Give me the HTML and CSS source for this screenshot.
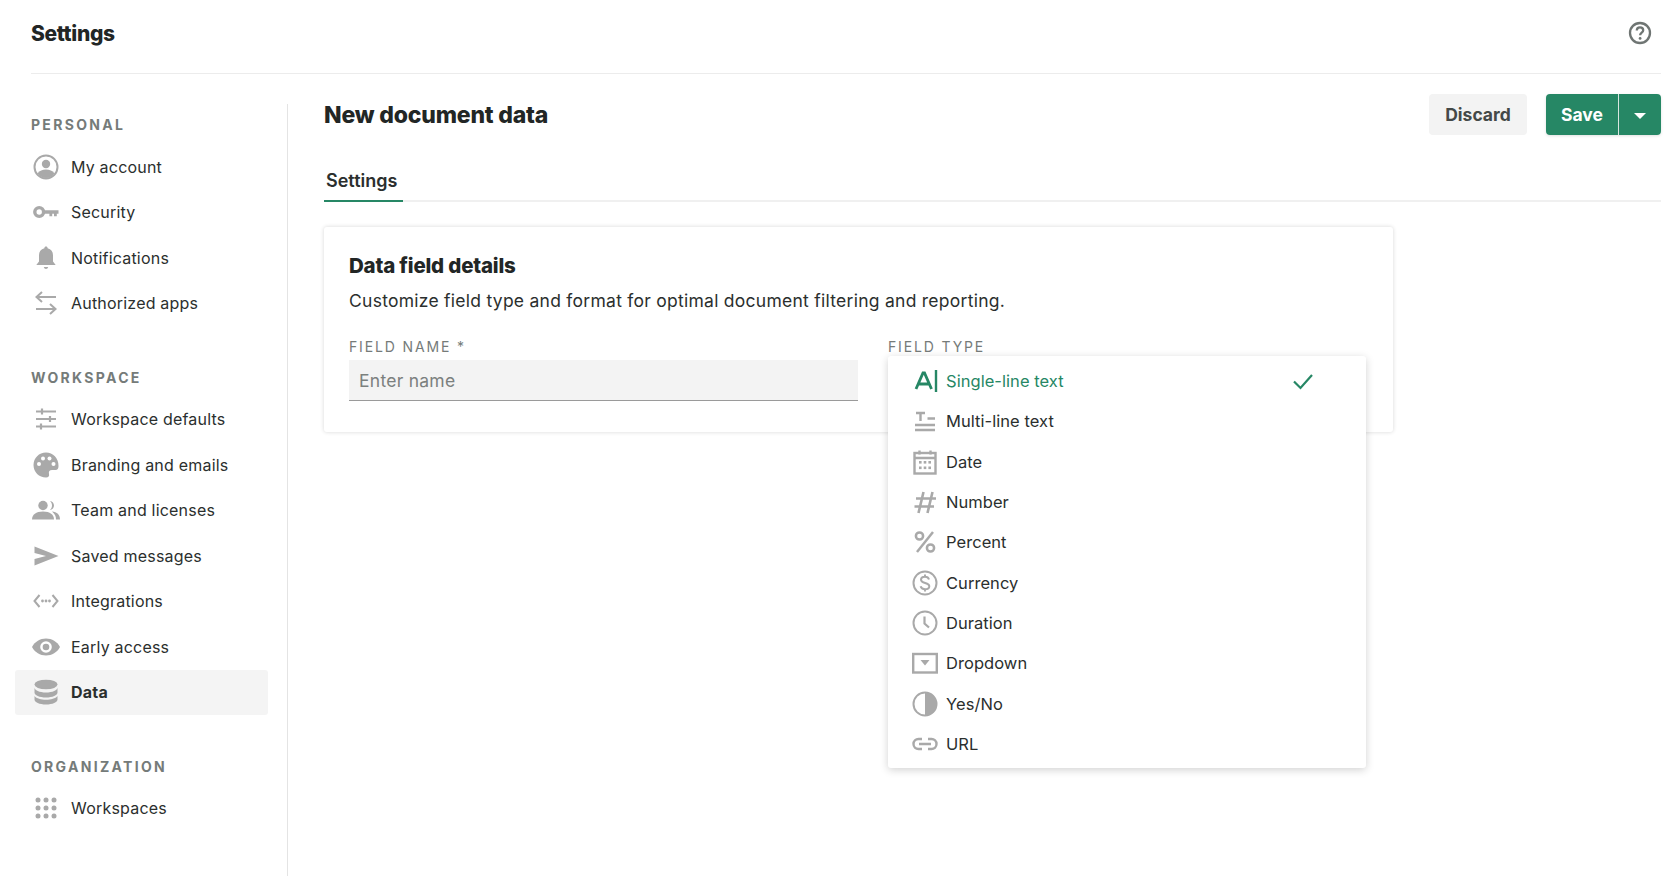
FILE: index.html
```html
<!DOCTYPE html>
<html lang="en">
  <head>
    <meta charset="UTF-8" />
    <title>Settings</title>
    <link rel="stylesheet" href="styles.css">
  </head>
  <body>
    <header class="topbar">
      <h1 class="appTitle">Settings</h1>
      <svg class="help" viewBox="0 0 24 24" width="24" height="24">
        <circle cx="12" cy="12" r="10" fill="none" stroke="#6f7573" stroke-width="2.3"/>
        <path d="M8.8 9.4c0-2 1.4-3.1 3.2-3.1s3.2 1.1 3.2 2.9c0 2.4-3.1 2.4-3.1 5" fill="none" stroke="#6f7573" stroke-width="2.3"/>
        <circle cx="12.1" cy="17.4" r="1.4" fill="#6f7573"/>
      </svg>
    </header>

    <div class="layout">
      <nav class="sidebar">
        <div class="navGroup">
          <div class="navTitle">PERSONAL</div>
          <a class="navItem">
            <svg viewBox="0 0 26 26" width="26" height="26"><circle cx="13" cy="13" r="11.5" fill="none" stroke="#a9a9a9" stroke-width="2"/><circle cx="13" cy="10" r="4.2" fill="#a9a9a9"/><path d="M4.5 19.5c2-3 5-4 8.5-4s6.5 1 8.5 4c-2 2.800-5 4.500-8.500 4.500s-6.500-1.700-8.500-4.500z" fill="#a9a9a9"/></svg>
            <span>My account</span>
          </a>
          <a class="navItem">
            <svg viewBox="0 0 26 26" width="26" height="26"><circle cx="6.200" cy="13" r="4.400" fill="none" stroke="#a9a9a9" stroke-width="3.400"/><path d="M10 11.200h15.500v3.600h-1.700v2.400H21v-2.400h-1.800v2.400h-2.800v-2.400H10z" fill="#a9a9a9"/></svg>
            <span>Security</span>
          </a>
          <a class="navItem">
            <svg viewBox="0 0 26 26" width="26" height="26"><path d="M13 1.500c1 0 1.600.7 1.600 1.700 3.600.8 5.400 3.500 5.400 7v6.300l2.700 3.500H3.300L6 16.500v-6.300c0-3.500 1.800-6.200 5.400-7 0-1 .6-1.700 1.600-1.700z" fill="#a9a9a9"/><path d="M10.800 22h4.400c-.3 1.300-1.100 2-2.200 2s-1.900-.7-2.200-2z" fill="#a9a9a9"/></svg>
            <span>Notifications</span>
          </a>
          <a class="navItem">
            <svg viewBox="0 0 26 26" width="26" height="26"><path d="M3.500 7H23M9 2L3.500 7 9 12M3 19h19.500M17 14l5.500 5-5.500 5" fill="none" stroke="#a9a9a9" stroke-width="2"/></svg>
            <span>Authorized apps</span>
          </a>
        </div>

        <div class="navGroup">
          <div class="navTitle">WORKSPACE</div>
          <a class="navItem">
            <svg viewBox="0 0 26 26" width="26" height="26"><path d="M3 5.500h20M3 13h20M3 20.500h20M9 2.500v6M17 10v6M8 17.500v6" fill="none" stroke="#a9a9a9" stroke-width="2.200"/></svg>
            <span>Workspace defaults</span>
          </a>
          <a class="navItem">
            <svg viewBox="0 0 26 26" width="26" height="26"><path d="M13 .5C6 .5.500 6 .500 13S6 25.500 13 25.500c2.500 0 3.500-1.500 3-3.500-.6-2.400.6-4 3-4h3.500c2 0 3-1.500 3-4C25.500 6 20 .5 13 .5z" fill="#a9a9a9"/><circle cx="6" cy="12" r="2" fill="#fff"/><circle cx="10" cy="6.500" r="2" fill="#fff"/><circle cx="16.500" cy="6.500" r="2" fill="#fff"/><circle cx="20.500" cy="12" r="2" fill="#fff"/></svg>
            <span>Branding and emails</span>
          </a>
          <a class="navItem">
            <svg viewBox="0 0 28 26" width="28" height="26"><circle cx="11" cy="8.500" r="4.700" fill="#a9a9a9"/><path d="M18 4c2.500.5 4 2.300 4 4.500s-1.500 4-4 4.500c1.300-1.300 2-2.800 2-4.500S19.300 5.300 18 4z" fill="#a9a9a9"/><path d="M0 22.500c0-5 4-8 11-8s11 3 11 8z" fill="#a9a9a9"/><path d="M20 14.500c5 .5 8 3 8 8h-4c0-3-1-5.500-4-8z" fill="#a9a9a9"/></svg>
            <span>Team and licenses</span>
          </a>
          <a class="navItem">
            <svg viewBox="0 0 26 26" width="26" height="26"><path d="M1.500 3.500L25.500 13 1.500 22.500v-6.500L13 13 1.500 10z" fill="#a9a9a9"/></svg>
            <span>Saved messages</span>
          </a>
          <a class="navItem">
            <svg viewBox="0 0 26 26" width="26" height="26"><path d="M6.500 7L1.500 13l5 6M19.500 7l5 6-5 6" fill="none" stroke="#a9a9a9" stroke-width="2"/><circle cx="9.500" cy="13" r="1.400" fill="#a9a9a9"/><circle cx="13" cy="13" r="1.400" fill="#a9a9a9"/><circle cx="16.500" cy="13" r="1.400" fill="#a9a9a9"/></svg>
            <span>Integrations</span>
          </a>
          <a class="navItem">
            <svg viewBox="0 0 28 26" width="28" height="26"><path d="M0 13C3 7.500 8 4.500 14 4.500S25 7.500 28 13c-3 5.500-8 8.500-14 8.500S3 18.500 0 13z" fill="#a9a9a9"/><circle cx="14" cy="13" r="5.800" fill="#fff"/><circle cx="14" cy="13" r="3.300" fill="#a9a9a9"/></svg>
            <span>Early access</span>
          </a>
          <a class="navItem active">
            <svg viewBox="0 0 26 26" width="26" height="26"><ellipse cx="13" cy="5.500" rx="11.500" ry="4.800" fill="#a9a9a9"/><path d="M1.500 8.500c0 2.800 5 5 11.500 5s11.500-2.200 11.500-5v5c0 2.800-5 5-11.500 5s-11.500-2.200-11.500-5z" fill="#a9a9a9"/><path d="M1.500 17c2 2.500 6.500 3.800 11.500 3.800s9.500-1.300 11.500-3.800v3.500c0 2.800-5 5-11.500 5s-11.500-2.200-11.500-5z" fill="#a9a9a9"/></svg>
            <span>Data</span>
          </a>
        </div>

        <div class="navGroup">
          <div class="navTitle">ORGANIZATION</div>
          <a class="navItem">
            <svg viewBox="0 0 26 26" width="26" height="26"><g fill="#a9a9a9"><circle cx="5" cy="5" r="2.500"/><circle cx="13" cy="5" r="2.500"/><circle cx="21" cy="5" r="2.500"/><circle cx="5" cy="13" r="2.500"/><circle cx="13" cy="13" r="2.500"/><circle cx="21" cy="13" r="2.500"/><circle cx="5" cy="21" r="2.500"/><circle cx="13" cy="21" r="2.500"/><circle cx="21" cy="21" r="2.500"/></g></svg>
            <span>Workspaces</span>
          </a>
        </div>
      </nav>

      <main class="main">
        <div class="mainHead">
          <h2 class="pageTitle">New document data</h2>
          <div class="actions">
            <button class="btn discard">Discard</button>
            <div class="saveGroup">
              <button class="btn save">Save</button>
              <button class="btn saveArrow"><span class="caret"></span></button>
            </div>
          </div>
        </div>

        <div class="tabs">
          <div class="tab">Settings</div>
        </div>

        <section class="card">
          <h3 class="cardTitle">Data field details</h3>
          <p class="cardText">Customize field type and format for optimal document filtering and reporting.</p>
          <div class="fields">
            <div class="field">
              <label class="fieldLabel">FIELD NAME *</label>
              <div class="input">Enter name</div>
            </div>
            <div class="field typeField">
              <label class="fieldLabel">FIELD TYPE</label>
              <ul class="menu">
                <li class="menuItem selected">
                  <svg viewBox="0 0 26 26" width="26" height="26"><path d="M4 21L11 5h1.500l7 16M6.500 16h11" fill="none" stroke="#268765" stroke-width="2.800"/><path d="M24 2v22" stroke="#268765" stroke-width="2.400"/></svg>
                  <span>Single-line text</span>
                  <svg class="check" viewBox="0 0 22 22" width="22" height="22"><path d="M2 11.500l6.500 6.500L20 5" fill="none" stroke="#268765" stroke-width="2.200"/></svg>
                </li>
                <li class="menuItem">
                  <svg viewBox="0 0 26 26" width="26" height="26"><path d="M4 5h9M8.500 5v8M15.500 10.500h7.500M3 17h20M3 22h20" fill="none" stroke="#a9a9a9" stroke-width="2.400"/></svg>
                  <span>Multi-line text</span>
                </li>
                <li class="menuItem">
                  <svg viewBox="0 0 26 26" width="26" height="26"><rect x="2.500" y="4" width="21" height="20.500" fill="none" stroke="#a9a9a9" stroke-width="2.400"/><path d="M2.500 9h21M7.500 1.500v4M18.500 1.500v4" fill="none" stroke="#a9a9a9" stroke-width="2.400"/><g fill="#a9a9a9"><rect x="7" y="12" width="2.600" height="2.600"/><rect x="11.700" y="12" width="2.600" height="2.600"/><rect x="16.400" y="12" width="2.600" height="2.600"/><rect x="7" y="17.500" width="2.600" height="2.600"/><rect x="11.700" y="17.500" width="2.600" height="2.600"/><rect x="16.400" y="17.500" width="2.600" height="2.600"/></g></svg>
                  <span>Date</span>
                </li>
                <li class="menuItem">
                  <svg viewBox="0 0 26 26" width="26" height="26"><path d="M11.500 3L6.500 24M20.500 3l-5 21M4 9.500H24M2.500 17.500H22" fill="none" stroke="#a9a9a9" stroke-width="2.600"/></svg>
                  <span>Number</span>
                </li>
                <li class="menuItem">
                  <svg viewBox="0 0 26 26" width="26" height="26"><circle cx="7.500" cy="7" r="3.600" fill="none" stroke="#a9a9a9" stroke-width="2.500"/><circle cx="18.500" cy="19" r="3.600" fill="none" stroke="#a9a9a9" stroke-width="2.500"/><path d="M5 23L21 3" stroke="#a9a9a9" stroke-width="2.500"/></svg>
                  <span>Percent</span>
                </li>
                <li class="menuItem">
                  <svg viewBox="0 0 26 26" width="26" height="26"><circle cx="13" cy="13" r="11.500" fill="none" stroke="#a9a9a9" stroke-width="2"/><path d="M17 9.500c-.5-1.800-2-2.700-4-2.700-2.300 0-4 1.200-4 3 0 4.200 8.300 2.200 8.300 6.400 0 1.900-1.800 3-4.300 3-2.300 0-3.900-1-4.400-2.900M13 4.500v2.300M13 19.200v2.300" fill="none" stroke="#a9a9a9" stroke-width="2"/></svg>
                  <span>Currency</span>
                </li>
                <li class="menuItem">
                  <svg viewBox="0 0 26 26" width="26" height="26"><circle cx="13" cy="13" r="11.500" fill="none" stroke="#a9a9a9" stroke-width="2"/><path d="M12.500 6.500v7l4.500 4" fill="none" stroke="#a9a9a9" stroke-width="2.200"/></svg>
                  <span>Duration</span>
                </li>
                <li class="menuItem">
                  <svg viewBox="0 0 26 26" width="26" height="26"><rect x="1.200" y="4" width="23.600" height="18.500" fill="none" stroke="#a9a9a9" stroke-width="2.400"/><path d="M8.500 10h9l-4.500 5.500z" fill="#a9a9a9"/></svg>
                  <span>Dropdown</span>
                </li>
                <li class="menuItem">
                  <svg viewBox="0 0 26 26" width="26" height="26"><circle cx="13" cy="13" r="11.500" fill="none" stroke="#a9a9a9" stroke-width="2"/><path d="M13 1.500a11.500 11.500 0 0 1 0 23z" fill="#a9a9a9"/></svg>
                  <span>Yes/No</span>
                </li>
                <li class="menuItem">
                  <svg viewBox="0 0 26 26" width="26" height="26"><path d="M10 8H6.500a5 5 0 0 0 0 10H10M16 8h3.500a5 5 0 0 1 0 10H16M7 13h12" fill="none" stroke="#a9a9a9" stroke-width="2.400"/></svg>
                  <span>URL</span>
                </li>
              </ul>
            </div>
          </div>
        </section>
      </main>
    </div>
  </body>
</html>
```

FILE: styles.css
```css
* {
  margin: 0;
  padding: 0;
  box-sizing: border-box;
}

html,
body {
  height: 876px;
  overflow: hidden;
}

body {
  font-family: "Inter", "Liberation Sans", sans-serif;
  color: #2b2f2e;
  background: #fff;
}

.topbar {
  height: 74px;
  margin: 0 19px 0 31px;
  display: flex;
  align-items: center;
  justify-content: space-between;
  border-bottom: 1px solid #ececec;
  padding-bottom: 7px;
  padding-right: 9px;
}

.appTitle {
  font-size: 21px;
  font-weight: 800;
  color: #222625;
  letter-spacing: -0.35px;
}

.layout {
  display: flex;
  height: 802px;
  padding-right: 19px;
}

.sidebar {
  width: 288px;
  flex-shrink: 0;
  margin-top: 30px;
  padding: 11px 19px 0 15px;
  border-right: 1px solid #e4e4e4;
}

.navGroup {
  margin-bottom: 41.5px;
}

.navTitle {
  height: 20px;
  line-height: 20px;
  padding-left: 16px;
  margin-bottom: 9px;
  font-size: 14px;
  font-weight: 700;
  letter-spacing: 2.3px;
  color: #757b79;
}

.navItem {
  display: flex;
  align-items: center;
  height: 45.5px;
  padding-left: 16px;
  font-size: 16px;
  letter-spacing: 0.2px;
  color: #2b2f2e;
  border-radius: 3px;
}

.navItem svg {
  width: 30px;
  flex-shrink: 0;
  margin-right: 10px;
}

.navItem.active {
  background: #f4f4f4;
  font-weight: 700;
}

.main {
  flex: 1;
  padding: 20px 0 0 36px;
}

.mainHead {
  display: flex;
  align-items: center;
  justify-content: space-between;
  height: 41px;
}

.pageTitle {
  font-size: 23px;
  font-weight: 800;
  color: #222625;
  letter-spacing: -0.2px;
}

.actions {
  display: flex;
  gap: 19px;
}

.btn {
  height: 41px;
  border: none;
  border-radius: 4px;
  font-family: inherit;
  font-size: 17.5px;
  font-weight: 700;
  cursor: pointer;
}

.discard {
  width: 98px;
  background: #f3f3f3;
  color: #444948;
}

.saveGroup {
  display: flex;
  box-shadow: 0 1px 3px rgba(0, 0, 0, 0.12);
  border-radius: 4px;
}

.save {
  width: 73px;
  background: #268765;
  color: #fff;
  border-radius: 4px 0 0 4px;
  border-right: 1px solid #d8e6e0;
}

.saveArrow {
  width: 42px;
  background: #268765;
  border-radius: 0 4px 4px 0;
}

.caret {
  display: inline-block;
  border-left: 6px solid transparent;
  border-right: 6px solid transparent;
  border-top: 6px solid #fff;
  vertical-align: middle;
}

.tabs {
  margin-top: 28px;
  height: 39px;
  border-bottom: 2px solid #f0f0f0;
}

.tab {
  display: inline-block;
  height: 39px;
  padding: 8px 6px 0 2px;
  font-size: 18px;
  font-weight: 600;
  line-height: 20px;
  border-bottom: 2px solid #268765;
}

.card {
  width: 1069px;
  height: 205px;
  margin-top: 25px;
  padding: 26px 25px 0;
  border-radius: 3px;
  box-shadow: 0 0 4px rgba(0, 0, 0, 0.16);
}

.cardTitle {
  font-size: 20.5px;
  font-weight: 800;
  line-height: 26px;
  color: #222625;
  letter-spacing: -0.2px;
}

.cardText {
  margin-top: 10px;
  font-size: 17.5px;
  letter-spacing: 0.26px;
  line-height: 24px;
}

.fields {
  display: grid;
  grid-template-columns: 509px 478px;
  gap: 30px;
  margin-top: 24px;
}

.field {
  position: relative;
}

.fieldLabel {
  display: block;
  height: 20px;
  line-height: 20px;
  margin-bottom: 3px;
  font-size: 14px;
  letter-spacing: 1.85px;
  color: #757b79;
}

.input {
  height: 41px;
  line-height: 42px;
  padding-left: 10px;
  font-size: 17.5px;
  letter-spacing: 0.26px;
  color: #7b807e;
  background: #f3f3f3;
  border-bottom: 1px solid #9a9a9a;
}

.menu {
  position: absolute;
  top: 19px;
  left: 0;
  width: 478px;
  height: 412px;
  padding-top: 5px;
  list-style: none;
  background: #fff;
  border-radius: 3px;
  box-shadow: 0 2px 8px rgba(0, 0, 0, 0.18);
}

.menuItem {
  display: flex;
  align-items: center;
  height: 40.3px;
  padding: 0 52px 0 24px;
  font-size: 16.5px;
  letter-spacing: 0.05px;
}

.menuItem svg {
  flex-shrink: 0;
  margin-right: 8px;
}

.menuItem span {
  flex: 1;
}

.menuItem.selected {
  color: #268765;
}

.menuItem svg.check {
  margin-right: 0;
}
```
